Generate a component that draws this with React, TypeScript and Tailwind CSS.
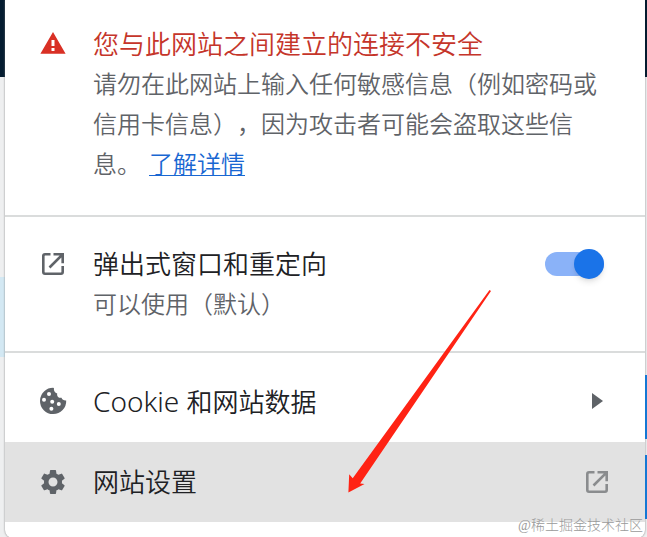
import { useState } from 'react';
import type { ReactNode } from 'react';
import { MdSettings } from 'react-icons/md';

const WarningIcon = () => (
  <svg viewBox="0 0 28 28" className="size-7 text-[#d93025]" fill="currentColor">
    <path fillRule="evenodd" d="M14 2 26.6 23.8H1.4zM12.5 10v6h3v-6zm0 8v3h3v-3z" />
  </svg>
);

const OpenIcon = () => (
  <svg viewBox="0 0 28 28" className="size-7" fill="none" stroke="currentColor" strokeWidth="2.6">
    <path d="M11.5 4.3H6a1.7 1.7 0 0 0-1.7 1.7v16A1.7 1.7 0 0 0 6 23.7h16a1.7 1.7 0 0 0 1.7-1.7v-6M14.5 4.3h9.2v9M23.2 4.8 10.5 17.5" />
  </svg>
);

const CookieIcon = () => (
  <svg viewBox="0 0 28 28" className="size-7" fill="currentColor">
    <path d="M14.9.9A13.1 13.1 0 1 0 27.2 13.4c-2.3.2-4-.6-4.7-2.6-2.6.5-4.9-1.6-4.3-4.4C15.8 5.8 14.6 3.6 14.9.9z" />
    <g fill="white">
      <circle cx="10" cy="7" r="2" />
      <circle cx="5" cy="12.7" r="2" />
      <circle cx="13.2" cy="14.8" r="2" />
      <circle cx="19.8" cy="17" r="2" />
      <circle cx="12.4" cy="21.8" r="2" />
    </g>
  </svg>
);

const Arrow = () => (
  <svg
    viewBox="0 0 144 204"
    className="pointer-events-none absolute left-[348px] top-[289px] w-36"
    fill="#ff2314"
  >
    <path d="M141.5 1 143 2 12.2 194.6l4.3.4L.4 203.4 1.2 185.2l3.5 4z" />
  </svg>
);

const Row = ({ icon, children }: { icon: ReactNode; children: ReactNode }) => (
  <div className="flex gap-[26px] px-[34px]">
    <span className="flex h-10 w-7 shrink-0 items-center justify-center">{icon}</span>
    {children}
  </div>
);

const App = () => {
  const [popupsAllowed, setPopupsAllowed] = useState(true);

  return (
    <main className="relative flex min-h-screen overflow-hidden bg-[#eeeff0] font-['Noto_Sans','Noto_Sans_CJK_SC',sans-serif] text-[26px] leading-10 font-[350] text-[#202124] [text-spacing-trim:space-all]">
      <div className="flex w-[5px] shrink-0 flex-col">
        <div className="h-[77px] bg-[#041c30]" />
        <div className="h-[200px]" />
        <div className="h-20 bg-[#d3e8f3]" />
      </div>

      <div className="min-w-0 flex-1 overflow-hidden rounded-b-lg bg-white text-[#5f6368] shadow-[0_0_2px_#777]">
        <section className="border-b-2 border-[#dadcdc] pb-[31px] pt-6">
          <Row icon={<WarningIcon />}>
            <div>
              <h1 className="text-[#c5352a]">您与此网站之间建立的连接不安全</h1>
              <p className="text-2xl leading-10">
                请勿在此网站上输入任何敏感信息（例如密码或信用卡信息），因为攻击者可能会盗取这些信息。
                <a
                  href="#details"
                  className="ml-2 inline-block text-[#1967d2] underline decoration-1 underline-offset-2"
                >
                  了解详情
                </a>
              </p>
            </div>
          </Row>
        </section>

        <section className="border-b-2 border-[#dadcdc] py-[27px]">
          <Row icon={<OpenIcon />}>
            <div className="flex-1">
              <label htmlFor="popups" className="block text-[#202124]">
                弹出式窗口和重定向
              </label>
              <p className="text-2xl leading-10">可以使用（默认）</p>
            </div>
            <span className="flex h-10 items-center pr-[7px]">
              <input
                id="popups"
                type="checkbox"
                checked={popupsAllowed}
                onChange={(e) => setPopupsAllowed(e.target.checked)}
                className="flex h-6 w-[59px] appearance-none items-center rounded-full bg-gray-300 before:size-[30px] before:shrink-0 before:rounded-full before:bg-white before:shadow-md checked:justify-end checked:bg-[#8ab2f8] checked:before:bg-[#1a73e8]"
              />
            </span>
          </Row>
        </section>

        <nav className="pb-4 pt-2">
          <button type="button" className="block w-full py-5 text-left">
            <Row icon={<CookieIcon />}>
              <span className="flex-1 text-[#202124]">
                <span className="text-[28px]">Cookie </span>
                和网站数据
              </span>
              <svg viewBox="0 0 28 40" className="h-10 w-7" fill="currentColor">
                <path d="M9 12v16l11-8z" />
              </svg>
            </Row>
          </button>
          <button type="button" className="block w-full bg-[#e2e2e2] py-5 text-left">
            <Row icon={<MdSettings className="size-[30px] shrink-0" />}>
              <span className="flex-1 text-[#202124]">网站设置</span>
              <span className="flex h-10 items-center text-[#8a8c8e]">
                <OpenIcon />
              </span>
            </Row>
          </button>
        </nav>
      </div>

      <div className="flex w-[2px] shrink-0 flex-col">
        <div className="h-[77px] bg-[#041c30]" />
        <div className="h-[298px]" />
        <div className="h-16 bg-[#1478d4]" />
        <div className="h-4" />
        <div className="h-16 bg-[#1478d4]" />
      </div>

      <Arrow />
      <p className="absolute right-1 bottom-0 font-['Liberation_Serif','Noto_Sans_CJK_SC',serif] text-sm leading-6 font-light text-[#9a9a9a]">
        @稀土掘金技术社区
      </p>
    </main>
  );
};

export default App;
